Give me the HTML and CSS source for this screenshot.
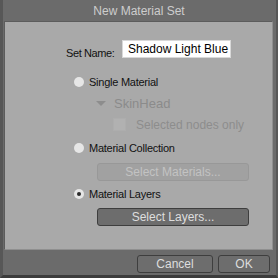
FILE: index.html
```html
<!DOCTYPE html>
<html lang="en">
<head>
    <meta charset="UTF-8">
    <meta name="viewport" content="width=device-width, initial-scale=1.0">
    <title>New Material Set</title>
    <link rel="stylesheet" href="styles.css">
</head>
<body>
    <div class="dialog">
        <div class="title">New Material Set</div>
        <div class="panel">
            <div class="name-row">
                <label class="name-label">Set Name:</label>
                <input class="name-input" type="text" value="Shadow Light Blue">
            </div>

            <div class="option first">
                <span class="radio"></span><span>Single Material</span>
            </div>
            <div class="node-row">
                <span class="tri"></span><span>SkinHead</span>
            </div>
            <div class="check-row">
                <span class="box"></span><span>Selected nodes only</span>
            </div>

            <div class="option second">
                <span class="radio"></span><span>Material Collection</span>
            </div>
            <div class="btn wide disabled">Select Materials...</div>

            <div class="option third">
                <span class="radio checked"></span><span>Material Layers</span>
            </div>
            <div class="btn wide layers">Select Layers...</div>
        </div>
        <div class="footer">
            <div class="btn cancel">Cancel</div>
            <div class="btn ok">OK</div>
        </div>
    </div>
</body>
</html>
```

FILE: styles.css
```css
*{
    margin: 0;
    padding: 0;
    box-sizing: border-box;
}
body{
    background: #6b6b6b;
    font-family: "Liberation Sans", Arial, sans-serif;
}

.dialog {
    width: 278px;
    height: 278px;
    background: #6b6b6b;
    border-left: 3px solid #575757;
    border-right: 2px solid #575757;
    border-bottom: 3px solid #3c3c3c;
    display: flex;
    flex-direction: column;
}

.title {
    height: 21px;
    line-height: 22px;
    margin-left: -3px;
    margin-right: -2px;
    text-align: center;
    font-size: 12px;
    color: #cdcdcd;
}

.panel {
    height: 229px;
    margin: 0 3px 0 1px;
    background: #a9a9a9;
    border: 1px solid #5c5c5c;
    border-right-color: #8f8f8f;
    border-bottom-color: #8f8f8f;
    padding: 18px 0 0 61px;
    display: flex;
    flex-direction: column;
    align-items: flex-start;
    font-size: 11px;
    color: #111;
}

.name-row {
    display: flex;
    align-items: flex-end;
    gap: 8px;
}
.name-label {
    width: 48px;
    line-height: 12px;
    margin-bottom: -1px;
    letter-spacing: -0.4px;
    white-space: nowrap;
}
.name-input {
    width: 109px;
    height: 18px;
    border: 1px solid #d8d8d8;
    background: #fff;
    padding: 0 0 0 5px;
    font-family: "Liberation Sans", Arial, sans-serif;
    font-size: 12px;
    color: #000;
    outline: none;
}

.option {
    display: flex;
    align-items: center;
    gap: 5px;
    height: 14px;
    margin-left: 8px;
    letter-spacing: -0.25px;
}
.option.first { margin-top: 17px; }
.option.second { margin-top: 10px; }
.option.third { margin-top: 6px; }

.radio {
    width: 10px;
    height: 10px;
    border-radius: 50%;
    background: #e6e6e6;
    display: flex;
    align-items: center;
    justify-content: center;
}
.radio.checked::after {
    content: "";
    width: 4px;
    height: 4px;
    border-radius: 50%;
    background: #2a2a2a;
}

.node-row {
    display: flex;
    align-items: center;
    gap: 8px;
    height: 16px;
    margin: 6px 0 0 30px;
    font-size: 13px;
    color: #8b8b8b;
}
.tri {
    width: 0;
    height: 0;
    border-left: 5px solid transparent;
    border-right: 5px solid transparent;
    border-top: 5px solid #8d8d8d;
}

.check-row {
    display: flex;
    align-items: center;
    gap: 10px;
    height: 13px;
    margin: 7px 0 0 47px;
    font-size: 12px;
    color: #8d8d8d;
}
.box {
    width: 13px;
    height: 13px;
    background: #b1b1b1;
    border: 1px solid #adadad;
}

.btn {
    height: 18px;
    border-radius: 3px;
    text-align: center;
    font-size: 12px;
    line-height: 16px;
    background: #6d6d6d;
    border: 1px solid #3e3e3e;
    color: #dedede;
}
.btn.wide {
    width: 152px;
    margin-left: 31px;
}
.btn.disabled {
    margin-top: 8px;
    background: #a1a1a1;
    border-color: #989898;
    color: #c3c3c3;
}
.btn.layers {
    margin-top: 7px;
}

.footer {
    display: flex;
    justify-content: flex-end;
    gap: 5px;
    padding: 5px 6px 0 0;
}
.btn.cancel {
    width: 76px;
}
.btn.ok {
    width: 52px;
}
```
